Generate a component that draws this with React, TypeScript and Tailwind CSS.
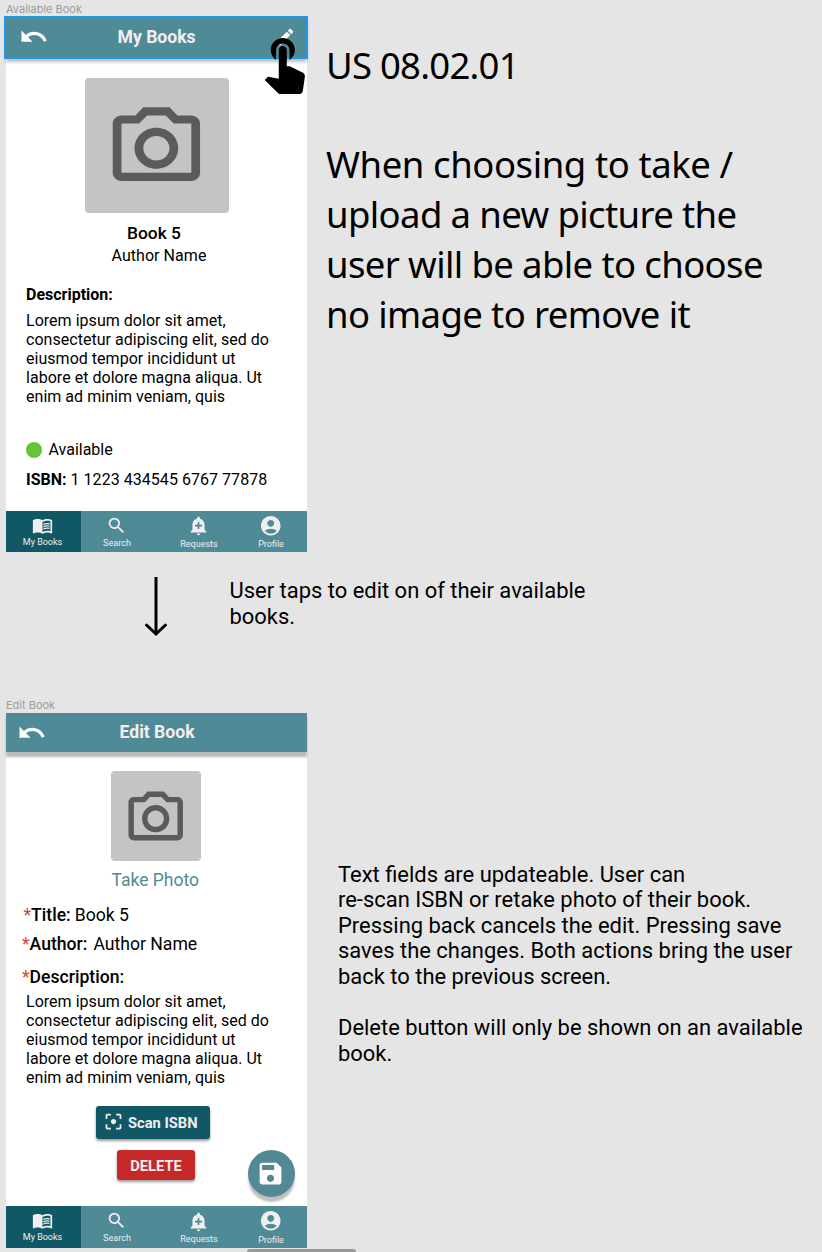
import type { ReactNode } from "react";
import {
  MdAccountCircle,
  MdAddAlert,
  MdFilterCenterFocus,
  MdMenuBook,
  MdSave,
  MdSearch,
} from "react-icons/md";

function BackIcon() {
  return (
    <svg viewBox="0 0 24 24" className="size-[29.5px] fill-white" aria-hidden="true">
      <path d="M12.5 8c-2.65 0-5.05.99-6.9 2.6L2 7v9h9l-3.62-3.62c1.39-1.16 3.16-1.88 5.12-1.88 3.54 0 6.55 2.31 7.6 5.5l2.37-.78C21.08 11.03 17.15 8 12.5 8z" />
    </svg>
  );
}

function EditIcon() {
  return (
    <svg viewBox="0 0 24 24" className="size-[22px] fill-white" aria-hidden="true">
      <path d="M3 17.25V21h3.75L17.81 9.94l-3.75-3.75L3 17.25zM20.71 7.04c.39-.39.39-1.02 0-1.41l-2.34-2.34c-.39-.39-1.02-.39-1.41 0l-1.83 1.83 3.75 3.75 1.83-1.83z" />
    </svg>
  );
}

function TapIcon() {
  return (
    <svg viewBox="0 0 24 24" className="size-[64.3px] fill-black" aria-hidden="true">
      <path d="M9 11.24V7.5C9 6.12 10.12 5 11.5 5S14 6.12 14 7.5v3.74c1.21-.81 2-2.18 2-3.74C16 5.01 13.99 3 11.5 3S7 5.01 7 7.5c0 1.56.79 2.93 2 3.74zm9.84 4.63l-4.54-2.26c-.17-.07-.35-.11-.54-.11H13v-6c0-.83-.67-1.5-1.5-1.5S10 6.67 10 7.5v10.74l-3.43-.72c-.08-.01-.15-.03-.24-.03-.31 0-.59.13-.79.33l-.79.8 4.94 4.94c.27.27.65.44 1.06.44h6.79c.75 0 1.33-.55 1.44-1.28l.75-5.27c.01-.07.02-.14.02-.2 0-.62-.38-1.16-.91-1.38z" />
    </svg>
  );
}

function CameraIcon({ className }: { className: string }) {
  return (
    <svg viewBox="0 0 24 24" preserveAspectRatio="none" className={className} fill="#5b5b5b" aria-hidden="true">
      <path d="M14.12 4l1.83 2H20v12H4V6h4.05l1.83-2h4.24M15 2H9L7.17 4H4c-1.1 0-2 .9-2 2v12c0 1.1.9 2 2 2h16c1.1 0 2-.9 2-2V6c0-1.1-.9-2-2-2h-3.17L15 2zm-3 7c1.65 0 3 1.35 3 3s-1.35 3-3 3-3-1.35-3-3 1.35-3 3-3m0-2c-2.76 0-5 2.24-5 5s2.24 5 5 5 5-2.24 5-5-2.24-5-5-5z" />
    </svg>
  );
}

function FrameLabel({ children }: { children: ReactNode }) {
  return (
    <div className="h-[17px] pt-[1px] font-['Inter'] text-[11px] leading-[16px] text-[#9c9c9c]">{children}</div>
  );
}

function Lorem() {
  return (
    <p className="whitespace-nowrap pl-5 text-[16px] leading-[19px] tracking-[0.03px]">
      Lorem ipsum dolor sit amet,
      <br />
      consectetur adipiscing elit, sed do
      <br />
      eiusmod tempor incididunt ut
      <br />
      labore et dolore magna aliqua. Ut
      <br />
      enim ad minim veniam, quis
    </p>
  );
}

function NavBar() {
  return (
    <nav className="flex h-[41.5px] text-[9px] leading-[10px] text-[#f0eeef]">
      <div className="flex w-[75px] flex-col items-center bg-[#115866] pr-[2px] pt-[4px]">
        <MdMenuBook className="size-[21px]" />
        <span className="mt-[1px]">My Books</span>
      </div>
      <div className="flex flex-1 bg-[#4f8b96]">
        <div className="flex w-[71px] flex-col items-center pt-[4px]">
          <MdSearch className="size-[21px]" />
          <span className="ml-[1px] mt-[2px] tracking-[0.05px]">Search</span>
        </div>
        <div className="flex w-[93px] flex-col items-center pt-[4.5px]">
          <MdAddAlert className="size-[21px]" />
          <span className="ml-[1px] mt-[2.5px]">Requests</span>
        </div>
        <div className="flex w-[52px] flex-col items-center pt-[3px]">
          <MdAccountCircle className="size-[23.5px]" />
          <span className="mt-[2px]">Profile</span>
        </div>
      </div>
    </nav>
  );
}

function AvailableBook() {
  return (
    <section className="ml-[6px] flex w-[301px] flex-col">
      <FrameLabel>Available Book</FrameLabel>
      <header className="relative flex h-[41px] items-center bg-[#4f8b96] pb-[1.5px] shadow-[0_4px_3px_rgba(0,0,0,0.25)]">
        <div className="ml-[13px]">
          <BackIcon />
        </div>
        <h1 className="ml-[69px] flex-1 text-[17.6px] font-bold text-[#f0eeef]">My Books</h1>
        <div className="mr-[11px]">
          <EditIcon />
        </div>
        <div className="absolute -bottom-[1px] -left-[2px] -right-[1px] -top-[1px] border-2 border-[#1e98f2]" />
        <div className="absolute left-[246.2px] top-[13px]">
          <TapIcon />
        </div>
      </header>
      <div className="h-[452.5px] bg-white pt-[19.5px]">
        <div className="ml-[79px] flex h-[135.5px] w-[144px] items-center justify-center rounded-[4px] bg-[#c4c4c4]">
          <CameraIcon className="mb-[-5px] mr-[1px] h-[98.4px] w-[104.8px]" />
        </div>
        <div className="mt-[9px] flex h-[22px] items-center pl-[121px] text-[17.4px] font-medium">Book 5</div>
        <div className="flex h-6 items-center pl-[105.5px] text-[16px] tracking-[0.05px]">Author Name</div>
        <div className="mt-[17px] flex h-5 items-center pl-5 text-[16px] font-bold">Description:</div>
        <div className="mt-[6px]">
          <Lorem />
        </div>
        <div className="mt-[34px] flex h-5 items-center gap-[6.5px] pl-5 text-[16px]">
          <span className="mb-[1px] size-4 rounded-full bg-[#65c437]" />
          Available
        </div>
        <div className="mt-[9.5px] flex h-5 items-center gap-1 pl-5 text-[16px]">
          <b>ISBN:</b>
          <span className="tracking-[0.04px]">1 1223 434545 6767 77878</span>
        </div>
      </div>
      <NavBar />
    </section>
  );
}

function EditBook() {
  return (
    <section className="ml-[6px] flex w-[301px] flex-col">
      <FrameLabel>Edit Book</FrameLabel>
      <header className="relative flex h-[39px] items-center bg-[#4f8b96] shadow-[0_5px_2px_rgba(0,0,0,0.27)]">
        <div className="ml-[10.5px]">
          <BackIcon />
        </div>
        <h1 className="ml-[73.5px] text-[17.6px] font-bold text-[#f0eeef]">Edit Book</h1>
      </header>
      <div className="h-[454px] bg-white pt-[19px]">
        <div className="ml-[105.3px] flex size-[90px] items-center justify-center rounded-[4px] bg-[#c4c4c4]">
          <CameraIcon className="mr-[1px] mt-[5px] size-[65.4px]" />
        </div>
        <div className="mt-[7px] flex h-6 items-center pl-[105.5px] text-[17.5px] text-[#4f8b96]">Take Photo</div>
        <div className="mt-[13px] flex h-5 items-center pl-[17.5px] text-[17.6px]">
          <span className="text-[#d0463b]">*</span>
          <span className="font-medium">Title:</span>
          <span className="ml-1">Book 5</span>
        </div>
        <div className="mt-[9px] flex h-5 items-center pl-[16px] text-[17.6px]">
          <span className="text-[#d0463b]">*</span>
          <span className="font-medium">Author:</span>
          <span className="ml-[6px]">Author Name</span>
        </div>
        <div className="mt-[13px] flex h-5 items-center pl-[16px] text-[17.6px]">
          <span className="text-[#d0463b]">*</span>
          <span className="font-medium">Description:</span>
        </div>
        <div className="mt-[4.5px]">
          <Lorem />
        </div>
        <div className="mt-[19.5px] flex h-[100px]">
          <div className="flex w-[242px] flex-col">
            <button className="ml-[90px] flex h-[33px] w-[113.5px] items-center rounded-[3px] bg-[#115866] pl-[7px] text-[14.7px] font-bold text-[#f0eeef] shadow-[0_2px_3px_rgba(0,0,0,0.4)]">
              <MdFilterCenterFocus className="mb-[2px] mr-[4px] size-[21px]" />
              <span className="pt-[1px]">Scan ISBN</span>
            </button>
            <button className="ml-[111px] mt-[11px] flex h-[29.5px] w-[78px] items-center justify-center rounded-[3px] bg-[#c62828] pt-[2px] text-[14.7px] font-bold text-[#f0eeef] shadow-[0_2px_3px_rgba(0,0,0,0.4)]">
              DELETE
            </button>
          </div>
          <button
            aria-label="Save"
            className="mt-[44px] flex size-[46.5px] items-center justify-center rounded-full bg-[#528994] text-white shadow-[0_5px_2px_rgba(0,0,0,0.25)]"
          >
            <MdSave className="mr-[1px] size-[29px]" />
          </button>
        </div>
      </div>
      <NavBar />
    </section>
  );
}

export default function App() {
  return (
    <main className="flex h-[1252px] w-[822px] flex-col overflow-hidden bg-[#e5e5e5] font-['Roboto',sans-serif] text-black">
      <div className="flex h-[553px] shrink-0 items-start">
        <AvailableBook />
        <div className="ml-[19px] whitespace-nowrap pt-[41px] font-['Noto_Sans',sans-serif] text-[36.5px] leading-[49.7px] tracking-[-0.62px]">
          <p className="tracking-[-0.75px]">US 08.02.01</p>
          <p className="mt-[49.7px]">
            <span className="tracking-[-0.42px]">When choosing to take /</span>
            <br />
            upload a new picture the
            <br />
            user will be able to choose
            <br />
            no image to remove it
          </p>
        </div>
      </div>
      <div className="flex h-[143px] shrink-0">
        <svg viewBox="0 0 24 62" className="ml-[144px] mt-[23px] h-[62px] w-6" fill="none" stroke="black" strokeWidth="3" aria-hidden="true">
          <path d="M12 1V58" />
          <path d="M2.5 49L12 58L21.5 49" strokeLinecap="round" />
        </svg>
        <p className="ml-[61.5px] mt-[25px] whitespace-nowrap text-[21.95px] leading-[25.7px]">
          User taps to edit on of their available
          <br />
          books.
        </p>
      </div>
      <div className="flex h-[552px] shrink-0 items-start">
        <EditBook />
        <p className="ml-[31px] mt-[165.5px] whitespace-nowrap text-[21.95px] leading-[25.65px]">
          Text fields are updateable. User can
          <br />
          re-scan ISBN or retake photo of their book.
          <br />
          Pressing back cancels the edit. Pressing save
          <br />
          saves the changes. Both actions bring the user
          <br />
          back to the previous screen.
          <br />
          <br />
          Delete button will only be shown on an available
          <br />
          book.
        </p>
      </div>
      <div className="ml-[247px] mt-[1px] h-2 w-[109px] shrink-0 rounded-t-[3px] bg-[#999]" />
    </main>
  );
}
